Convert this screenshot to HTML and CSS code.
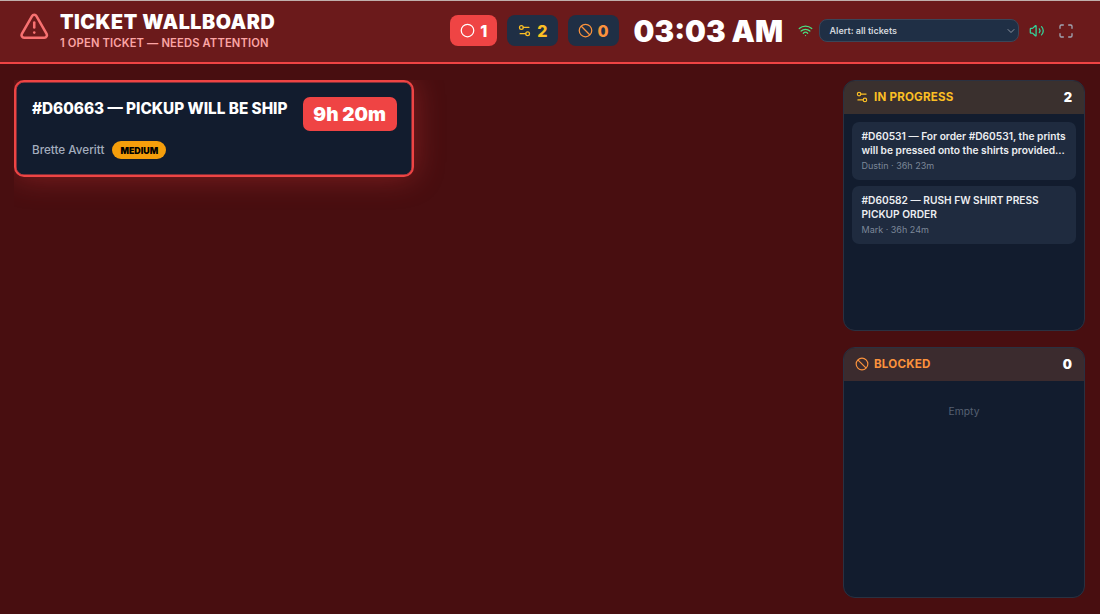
FILE: index.html
```html
<!DOCTYPE html>
<html lang="en">
<head>
<meta charset="utf-8">
<title>Ticket Wallboard</title>
<link rel="stylesheet" href="styles.css">
</head>
<body>
<header class="topbar">
  <div class="brand">
    <svg class="brand-icon" viewBox="0 0 24 24" fill="none" stroke="currentColor" stroke-width="2" stroke-linecap="round" stroke-linejoin="round"><path d="m21.73 18-8-14a2 2 0 0 0-3.48 0l-8 14A2 2 0 0 0 4 21h16a2 2 0 0 0 1.73-3"/><path d="M12 9v4"/><path d="M12 17h.01"/></svg>
    <div class="brand-text">
      <h1 class="brand-title">TICKET WALLBOARD</h1>
      <p class="brand-sub">1 OPEN TICKET — NEEDS ATTENTION</p>
    </div>
  </div>
  <div class="stats">
    <div class="stat stat-open">
      <svg class="stat-icon" viewBox="0 0 24 24" fill="none" stroke="currentColor" stroke-width="2"><circle cx="12" cy="12" r="10"/></svg>
      <span>1</span>
    </div>
    <div class="stat stat-progress">
      <svg class="stat-icon" viewBox="0 0 24 24" fill="none" stroke="currentColor" stroke-width="2" stroke-linecap="round"><path d="M14 17H5"/><path d="M19 7h-9"/><circle cx="17" cy="17" r="3"/><circle cx="7" cy="7" r="3"/></svg>
      <span>2</span>
    </div>
    <div class="stat stat-blocked">
      <svg class="stat-icon" viewBox="0 0 24 24" fill="none" stroke="currentColor" stroke-width="2"><circle cx="12" cy="12" r="10"/><path d="m4.9 4.9 14.2 14.2"/></svg>
      <span>0</span>
    </div>
  </div>
  <div class="clock">03:03 AM</div>
  <div class="controls">
    <svg class="wifi" viewBox="0 0 24 24" fill="none" stroke="currentColor" stroke-width="2" stroke-linecap="round" stroke-linejoin="round"><path d="M12 20h.01"/><path d="M2 8.82a15 15 0 0 1 20 0"/><path d="M5 12.859a10 10 0 0 1 14 0"/><path d="M8.5 16.429a5 5 0 0 1 7 0"/></svg>
    <div class="alert-select">
      <span>Alert: all tickets</span>
      <svg class="chev" viewBox="0 0 24 24" fill="none" stroke="currentColor" stroke-width="2" stroke-linecap="round" stroke-linejoin="round"><path d="m6 9 6 6 6-6"/></svg>
    </div>
    <svg class="sound" viewBox="0 0 24 24" fill="none" stroke="currentColor" stroke-width="2" stroke-linecap="round" stroke-linejoin="round"><path d="M11 4.7a.7.7 0 0 0-1.2-.5L6.4 7.6A2 2 0 0 1 5 8.2H3a1 1 0 0 0-1 1v5.6a1 1 0 0 0 1 1h2a2 2 0 0 1 1.4.6l3.4 3.4a.7.7 0 0 0 1.2-.5z"/><path d="M16 9a5 5 0 0 1 0 6"/><path d="M19.4 18.4a9 9 0 0 0 0-12.8"/></svg>
    <svg class="expand" viewBox="0 0 24 24" fill="none" stroke="currentColor" stroke-width="2" stroke-linecap="round" stroke-linejoin="round"><path d="M8 3H5a2 2 0 0 0-2 2v3"/><path d="M21 8V5a2 2 0 0 0-2-2h-3"/><path d="M3 16v3a2 2 0 0 0 2 2h3"/><path d="M16 21h3a2 2 0 0 0 2-2v-3"/></svg>
  </div>
</header>
<main class="board">
  <section class="open-col">
    <article class="ticket">
      <div class="ticket-top">
        <h2 class="ticket-title">#D60663 — PICKUP WILL BE SHIP</h2>
        <div class="ticket-age">9h 20m</div>
      </div>
      <div class="ticket-meta">
        <span class="ticket-owner">Brette Averitt</span>
        <span class="badge">MEDIUM</span>
      </div>
    </article>
  </section>
  <aside class="side">
    <section class="panel">
      <div class="panel-head head-progress">
        <svg class="panel-icon" viewBox="0 0 24 24" fill="none" stroke="currentColor" stroke-width="2" stroke-linecap="round"><path d="M14 17H5"/><path d="M19 7h-9"/><circle cx="17" cy="17" r="3"/><circle cx="7" cy="7" r="3"/></svg>
        <span class="panel-name">IN PROGRESS</span>
        <span class="panel-count">2</span>
      </div>
      <div class="panel-body">
        <div class="mini">
          <div class="mini-title">#D60531 — For order #D60531, the prints will be pressed onto the shirts provided...</div>
          <div class="mini-meta">Dustin · 36h 23m</div>
        </div>
        <div class="mini">
          <div class="mini-title">#D60582 — RUSH FW SHIRT PRESS PICKUP ORDER</div>
          <div class="mini-meta">Mark · 36h 24m</div>
        </div>
      </div>
    </section>
    <section class="panel">
      <div class="panel-head head-blocked">
        <svg class="panel-icon" viewBox="0 0 24 24" fill="none" stroke="currentColor" stroke-width="2"><circle cx="12" cy="12" r="10"/><path d="m4.9 4.9 14.2 14.2"/></svg>
        <span class="panel-name">BLOCKED</span>
        <span class="panel-count">0</span>
      </div>
      <div class="panel-body">
        <div class="empty">Empty</div>
      </div>
    </section>
  </aside>
</main>
</body>
</html>
```
FILE: styles.css
```css
* { box-sizing: border-box; }
html, body { margin: 0; height: 100%; }
body {
  width: 1100px;
  height: 614px;
  overflow: hidden;
  display: flex;
  flex-direction: column;
  background: #480e10;
  font-family: Inter, "Liberation Sans", sans-serif;
  color: #fff;
}
h1, h2, p { margin: 0; }

.topbar {
  height: 64px;
  flex: none;
  display: flex;
  align-items: center;
  padding: 0 26px 2px 19px;
  background: #6b1a1b;
  border-top: 1px solid #c0b0ac;
  border-bottom: 2px solid #ef4444;
}
.brand { display: flex; align-items: center; gap: 10.5px; flex: 1; }
.brand-icon { width: 30.5px; height: 30.5px; color: #f87171; flex: none; margin-bottom: 9px; }
.brand-title { font-size: 19.7px; line-height: 20px; font-weight: 900; letter-spacing: 0.55px; margin-bottom: 4px; }
.brand-sub { font-size: 11.2px; line-height: 14px; font-weight: 600; color: #fca5a5; letter-spacing: 0.15px; }

.stats { display: flex; gap: 10px; }
.stat {
  height: 30.5px;
  display: flex;
  align-items: center;
  gap: 5px;
  padding: 0 10px;
  border-radius: 8px;
  font-size: 16px;
  font-weight: 800;
}
.stat-icon { width: 15px; height: 15px; flex: none; }
.stat-open { background: #ef4444; color: #fff; }
.stat-progress { background: #1f2f45; color: #fbbf24; }
.stat-blocked { background: #1f2f45; color: #fb923c; }

.clock {
  margin-left: 15px;
  padding-top: 2px;
  font-size: 29.4px;
  line-height: 36px;
  font-weight: 900;
  white-space: nowrap;
}

.controls { display: flex; align-items: center; margin-left: 15px; }
.wifi { width: 15px; height: 15px; color: #4ade80; flex: none; }
.alert-select {
  width: 200px;
  height: 23.5px;
  margin-left: 6px;
  display: flex;
  align-items: center;
  justify-content: space-between;
  padding: 0 1px 0 9.5px;
  background: #1f2f45;
  border: 1px solid #3a4659;
  border-radius: 8px;
  font-size: 9px;
  font-weight: 600;
  color: #d1d5db;
}
.chev { width: 12px; height: 12px; color: #8b93a1; flex: none; }
.sound { width: 15.5px; height: 15.5px; color: #34d399; margin-left: 10px; flex: none; }
.expand { width: 16px; height: 16px; color: #a0a5b2; margin-left: 13.5px; flex: none; }

.board {
  flex: 1;
  min-height: 0;
  display: flex;
  gap: 16px;
  padding: 16px 15px 16px 14px;
}
.open-col { flex: 1; min-width: 0; overflow: hidden; padding-right: 414px; }
.ticket {
  width: 400px;
  height: 97px;
  padding: 15px 15.5px 0 16px;
  background: #121c2e;
  border: 2.5px solid #ef4444;
  border-radius: 10px;
  box-shadow: inset 0 0 0 0.5px #ef4444, 0 0 30px rgba(239, 68, 68, 0.34);
}
.ticket-top { display: flex; justify-content: space-between; align-items: flex-start; }
.ticket-title { font-size: 15.3px; line-height: 20px; font-weight: 800; margin-top: 2px; }
.ticket-age {
  height: 34px;
  padding: 0 10.5px;
  display: flex;
  align-items: center;
  background: #ef4444;
  border-radius: 7px;
  font-size: 19px;
  font-weight: 900;
  white-space: nowrap;
}
.ticket-meta { display: flex; align-items: center; gap: 8px; margin-top: 10px; }
.ticket-owner { font-size: 11.7px; font-weight: 500; color: #a3adbd; }
.badge {
  height: 18px;
  padding: 0 8px;
  display: flex;
  align-items: center;
  background: #f59e0b;
  color: #000;
  border-radius: 9px;
  font-size: 8.9px;
  font-weight: 900;
}

.side { width: 242px; flex: none; display: flex; flex-direction: column; gap: 16px; }
.panel {
  flex: 1;
  min-height: 0;
  display: flex;
  flex-direction: column;
  background: #121c2e;
  border: 1px solid #2a3141;
  border-radius: 12px;
  overflow: hidden;
}
.panel-head {
  height: 34px;
  flex: none;
  display: flex;
  align-items: center;
  gap: 5px;
  padding: 0 13px 0 12px;
  margin: -1px -1px 0;
}
.head-progress { background: #3a302e; color: #fbbf24; }
.head-blocked { background: #3b2b2e; color: #fb923c; }
.panel-icon { width: 14px; height: 14px; flex: none; }
.panel-name { flex: 1; font-size: 11.6px; font-weight: 700; letter-spacing: 0.2px; }
.panel-count { font-size: 12.9px; font-weight: 900; color: #fff; }
.panel-body { flex: 1; padding: 8px 8px; display: flex; flex-direction: column; gap: 6px; }
.mini { padding: 7px 6px 8px 9.5px; background: #1f2b3f; border-radius: 7px; }
.mini-title { font-size: 10.2px; line-height: 14px; font-weight: 600; color: #eceef1; }
.mini-meta { font-size: 9px; line-height: 12px; margin-top: 3px; color: #7c8798; }
.empty { margin-top: 15px; text-align: center; font-size: 10.3px; line-height: 14px; color: #566072; }
```
